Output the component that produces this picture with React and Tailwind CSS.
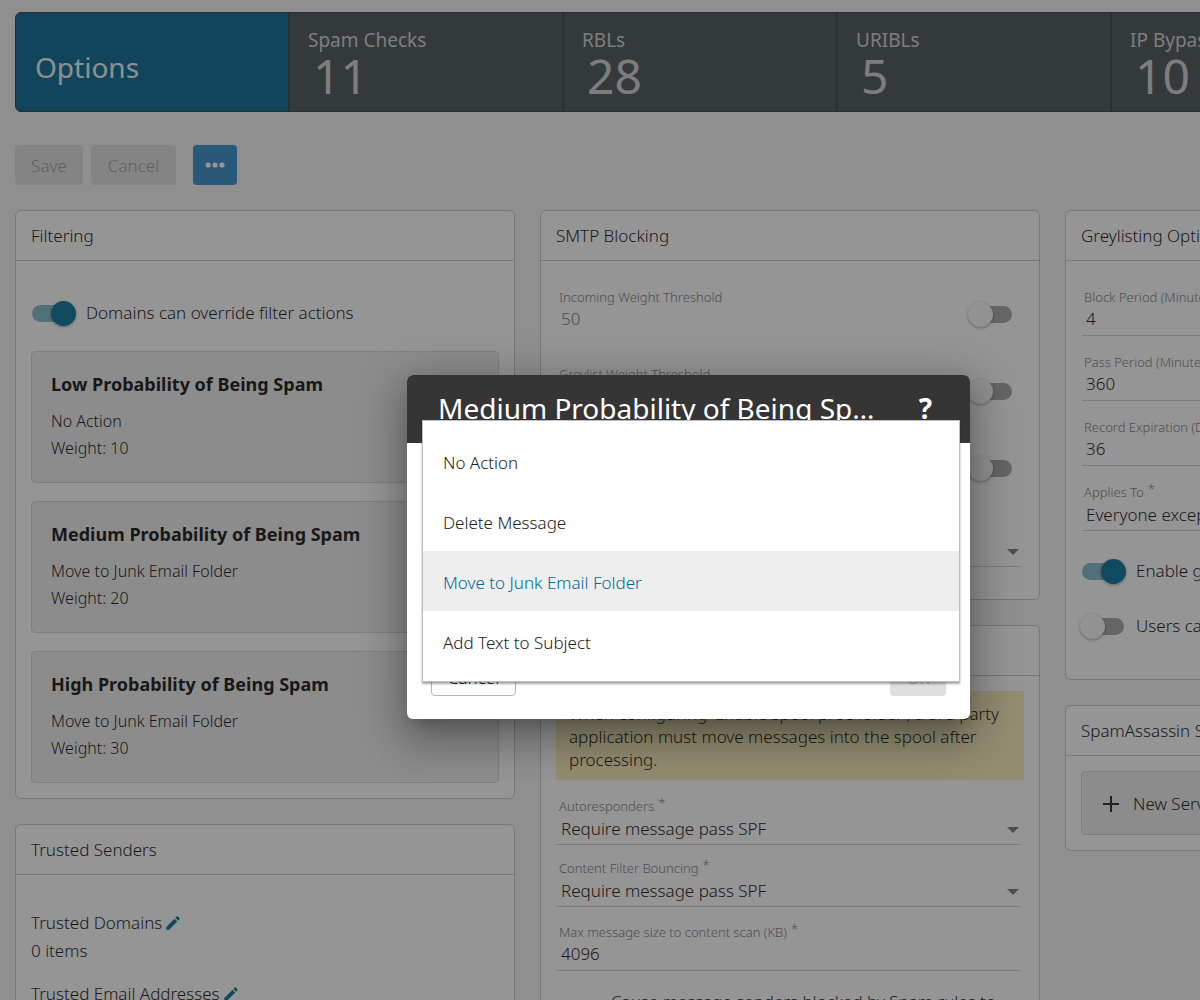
import { useState } from "react";

const tiles = [
  { label: "Spam Checks", value: 11 },
  { label: "RBLs", value: 28 },
  { label: "URIBLs", value: 5 },
  { label: "IP Bypasses", value: 10 },
];

const levels = [
  { name: "Low Probability of Being Spam", action: "No Action", weight: 10 },
  { name: "Medium Probability of Being Spam", action: "Move to Junk Email Folder", weight: 20 },
  { name: "High Probability of Being Spam", action: "Move to Junk Email Folder", weight: 30 },
];

const actions = ["No Action", "Delete Message", "Move to Junk Email Folder", "Add Text to Subject"];

function Card({ title, className = "", children }) {
  return (
    <section className={`rounded-md border border-[#c8c8c8] bg-white ${className}`}>
      <h2 className="flex h-[50px] items-center border-b border-[#c8c8c8] px-[15px] text-[17px]">{title}</h2>
      {children}
    </section>
  );
}

function Switch({ on = false, ...rest }) {
  return (
    <input
      type="checkbox"
      role="switch"
      defaultChecked={on}
      className="relative h-[17px] w-[42px] shrink-0 appearance-none rounded-full bg-[#a3a3a3] before:absolute before:-top-1 before:-left-0.5 before:size-[25px] before:rounded-full before:bg-[#fafafa] before:shadow-[0_1px_3px_rgba(0,0,0,0.4)] checked:bg-[#7fb8cc] checked:before:left-[19px] checked:before:bg-[#006f9a]"
      {...rest}
    />
  );
}

function SwitchRow({ id, on, children }) {
  return (
    <div className="flex items-center gap-3">
      <Switch id={id} on={on} />
      <label htmlFor={id} className="text-[17px] leading-6">{children}</label>
    </div>
  );
}

function FieldLabel({ id, required, children }) {
  return (
    <label htmlFor={id} className="flex h-5 items-center px-0.5 pt-0.5 text-[13px] whitespace-nowrap text-[#777]">
      {children}
      {required && <span className="-mt-1.5 ml-1">*</span>}
    </label>
  );
}

function TextField({ id, label, value, required }) {
  return (
    <div>
      <FieldLabel id={id} required={required}>{label}</FieldLabel>
      <input
        id={id}
        defaultValue={value}
        className="block h-[29px] w-full border-b border-[#cfcfcf] px-1 pb-1.5 text-[17px] outline-none"
      />
    </div>
  );
}

function SelectField({ id, label, value }) {
  return (
    <div>
      {label && <FieldLabel id={id} required>{label}</FieldLabel>}
      <div className="relative">
        <select
          id={id}
          aria-label={label ? undefined : "Blocking mode"}
          className="block h-[29px] w-full appearance-none border-b border-[#cfcfcf] px-1 pb-0.5 text-[17px] text-[#111] outline-none"
        >
          <option>{value}</option>
        </select>
        <svg viewBox="0 0 12 6" className="pointer-events-none absolute top-[11px] right-0.5 h-1.5 w-3 fill-[#777]">
          <path d="M0 0h12L6 6z" />
        </svg>
      </div>
    </div>
  );
}

function ThresholdField({ id, label }) {
  return (
    <div className="flex items-end justify-between pr-[9px]">
      <div>
        <FieldLabel id={id}>{label}</FieldLabel>
        <input id={id} disabled defaultValue="50" className="block h-6 w-60 px-1 text-[17px] text-[#777]" />
      </div>
      <div className="flex pb-2">
        <Switch aria-label={label} />
      </div>
    </div>
  );
}

function Pencil() {
  return (
    <svg viewBox="0 0 24 24" className="size-[18px] fill-[#006f9a]">
      <path d="M3 17.25V21h3.75L17.81 9.94l-3.75-3.75zM20.71 7.04a1 1 0 0 0 0-1.41l-2.34-2.34a1 1 0 0 0-1.41 0l-1.83 1.83 3.75 3.75z" />
    </svg>
  );
}

function TrustedList({ name }) {
  return (
    <div className="text-[17px] leading-7">
      <div className="flex items-center gap-0.5">
        {name}
        <button aria-label={`Edit ${name}`}><Pencil /></button>
      </div>
      <p>0 items</p>
    </div>
  );
}

function Page() {
  return (
    <main className="px-[15px] pt-3">
      <nav className="flex w-max overflow-hidden rounded-md border border-[#2d383c] bg-[#465155]">
        <a href="#options" className="flex h-[98px] w-[272px] items-center bg-[#006791] px-[19px] pt-2.5 text-[28px] font-normal text-[#f4f4f4]">
          Options
        </a>
        {tiles.map((t) => (
          <a
            key={t.label}
            href="#tile"
            className="flex h-[98px] w-[274px] flex-col border-l-2 border-[#343f43] px-[18px] pt-[13px] font-normal text-[#d2d2d2]"
          >
            <span className="text-[19px] leading-7">{t.label}</span>
            <span className="pl-[5px] text-5xl leading-[44px]">{t.value}</span>
          </a>
        ))}
      </nav>

      <div className="mt-[33px] flex h-10 gap-2 text-[17px]">
        <button disabled className="w-[68px] rounded-sm bg-[#dfdfdf] pt-0.5 text-[#999]">Save</button>
        <button disabled className="w-[85px] rounded-sm bg-[#dfdfdf] pt-0.5 text-[#999]">Cancel</button>
        <button aria-label="More actions" className="ml-[9px] flex w-11 items-center justify-center rounded-sm bg-[#2e8acb]">
          <svg viewBox="0 0 20 6" className="h-1.5 w-5 fill-white">
            <circle cx="3" cy="3" r="2.6" />
            <circle cx="10" cy="3" r="2.6" />
            <circle cx="17" cy="3" r="2.6" />
          </svg>
        </button>
      </div>

      <div className="mt-[25px] grid grid-cols-[repeat(3,500px)] items-start gap-[25px]">
        <div className="flex flex-col gap-[25px]">
          <Card title="Filtering">
            <div className="px-[15px] pt-10 pb-[15px]">
              <div className="pl-px"><SwitchRow id="override" on>Domains can override filter actions</SwitchRow></div>
              <div className="mt-[26px] flex flex-col gap-[18px]">
                {levels.map((l) => (
                  <article key={l.name} className="h-[132px] rounded-sm border border-[#d3d3d3] bg-[#ededed] px-[19px] pt-[18px]">
                    <h3 className="text-lg leading-7 font-bold">{l.name}</h3>
                    <p className="mt-2.5 text-base leading-[27px]">{l.action}</p>
                    <p className="text-base leading-[27px]">Weight: {l.weight}</p>
                  </article>
                ))}
              </div>
            </div>
          </Card>
          <Card title="Trusted Senders">
            <div className="flex flex-col gap-[15px] px-[15px] pt-[34px] pb-4">
              <TrustedList name="Trusted Domains" />
              <TrustedList name="Trusted Email Addresses" />
            </div>
          </Card>
        </div>

        <div className="flex flex-col gap-[25px]">
          <Card title="SMTP Blocking">
            <div className="flex flex-col gap-[33px] pt-[26px] pr-[18px] pb-8 pl-4">
              <ThresholdField id="incoming" label="Incoming Weight Threshold" />
              <ThresholdField id="greylist" label="Greylist Weight Threshold" />
              <ThresholdField id="outgoing" label="Outgoing Weight Threshold" />
              <div className="pt-5"><SelectField id="blocking" value="None" /></div>
            </div>
          </Card>
          <Card title="Options">
            <div className="px-[15px] pt-[15px] pb-8">
              <p className="bg-[#faf0bb] px-[13px] pt-[11px] pb-[9px] text-[17px] leading-[23px]">
                When configuring 'Enable spool proc folder', a 3rd party application must move messages into the spool
                after processing.
              </p>
              <div className="flex flex-col gap-[13px] pt-4 pr-[3px] pl-px">
                <SelectField id="autoresponders" label="Autoresponders" value="Require message pass SPF" />
                <SelectField id="bouncing" label="Content Filter Bouncing" value="Require message pass SPF" />
                <div className="pt-0.5">
                  <TextField id="maxsize" label="Max message size to content scan (KB)" value="4096" required />
                </div>
                <div className="pt-1.5">
                  <SwitchRow id="blocked">Cause message senders blocked by Spam rules to receive bounce messages</SwitchRow>
                </div>
              </div>
            </div>
          </Card>
        </div>

        <div className="flex flex-col gap-[25px]">
          <Card title="Greylisting Options">
            <div className="flex flex-col gap-4 px-4 pt-[26px] pb-[41px]">
              <TextField id="block" label="Block Period (Minutes)" value="4" required />
              <TextField id="pass" label="Pass Period (Minutes)" value="360" required />
              <TextField id="expire" label="Record Expiration (Days)" value="36" required />
              <SelectField id="applies" label="Applies To" value="Everyone except specified" />
              <div className="flex flex-col gap-[31px] pt-3">
                <SwitchRow id="enable" on>Enable greylisting</SwitchRow>
                <SwitchRow id="users">Users can override greylisting</SwitchRow>
              </div>
            </div>
          </Card>
          <Card title="SpamAssassin Servers">
            <div className="p-[15px]">
              <button className="flex h-16 w-full items-center gap-3 rounded-sm border border-[#d3d3d3] bg-[#ededed] px-[19px] pt-0.5 text-[17px]">
                <svg viewBox="0 0 20 20" className="size-5 fill-none stroke-[#222] stroke-2">
                  <path d="M10 2v16M2 10h16" />
                </svg>
                New Server
              </button>
            </div>
          </Card>
        </div>
      </div>
    </main>
  );
}

function ActionDialog() {
  const [selected, setSelected] = useState(actions[2]);
  return (
    <div
      role="dialog"
      aria-label="Medium Probability of Being Spam"
      className="absolute top-[375px] left-[407px] flex h-[344px] w-[563px] flex-col justify-between rounded-md bg-white shadow-[0_11px_15px_-7px_rgba(0,0,0,0.2),0_24px_38px_3px_rgba(0,0,0,0.14),0_9px_46px_8px_rgba(0,0,0,0.22)]"
    >
      <header className="flex h-[68px] items-center justify-between rounded-t-md bg-[#353535] pr-[38px] pb-0.5 pl-[31px] font-normal text-white">
        <h2 className="w-[446px] truncate text-[28px]">Medium Probability of Being Spam</h2>
        <button aria-label="Help" className="text-[28px] font-bold">?</button>
      </header>
      <footer className="flex justify-between px-6 pb-[23px] text-[17px]">
        <button className="h-10 w-[85px] rounded-sm border border-[#b5b5b5] pt-1">Cancel</button>
        <button disabled className="h-10 w-14 rounded-sm bg-[#dfdfdf] pt-1 text-[#999]">OK</button>
      </footer>
      <ul
        role="listbox"
        aria-label="Action"
        className="absolute top-[45px] left-[15px] w-[538px] border border-[#bdbdbd] bg-white py-2.5 shadow-[0_2px_2px_rgba(0,0,0,0.35)]"
      >
        {actions.map((a) => (
          <li key={a} role="option" aria-selected={a === selected}>
            <button
              onClick={() => setSelected(a)}
              className={`flex h-[60px] w-full items-center px-5 pt-[3px] text-[17px] ${
                a === selected ? "bg-[#eeeeee] text-[#006a98]" : "text-[#222]"
              }`}
            >
              {a}
            </button>
          </li>
        ))}
      </ul>
    </div>
  );
}

export default function App() {
  return (
    <div className="relative h-screen overflow-hidden bg-[#f4f4f4] font-['Noto_Sans','Open_Sans',sans-serif] font-light text-[#111]">
      <Page />
      <div className="absolute inset-0 bg-[#212121]/48" />
      <ActionDialog />
    </div>
  );
}
